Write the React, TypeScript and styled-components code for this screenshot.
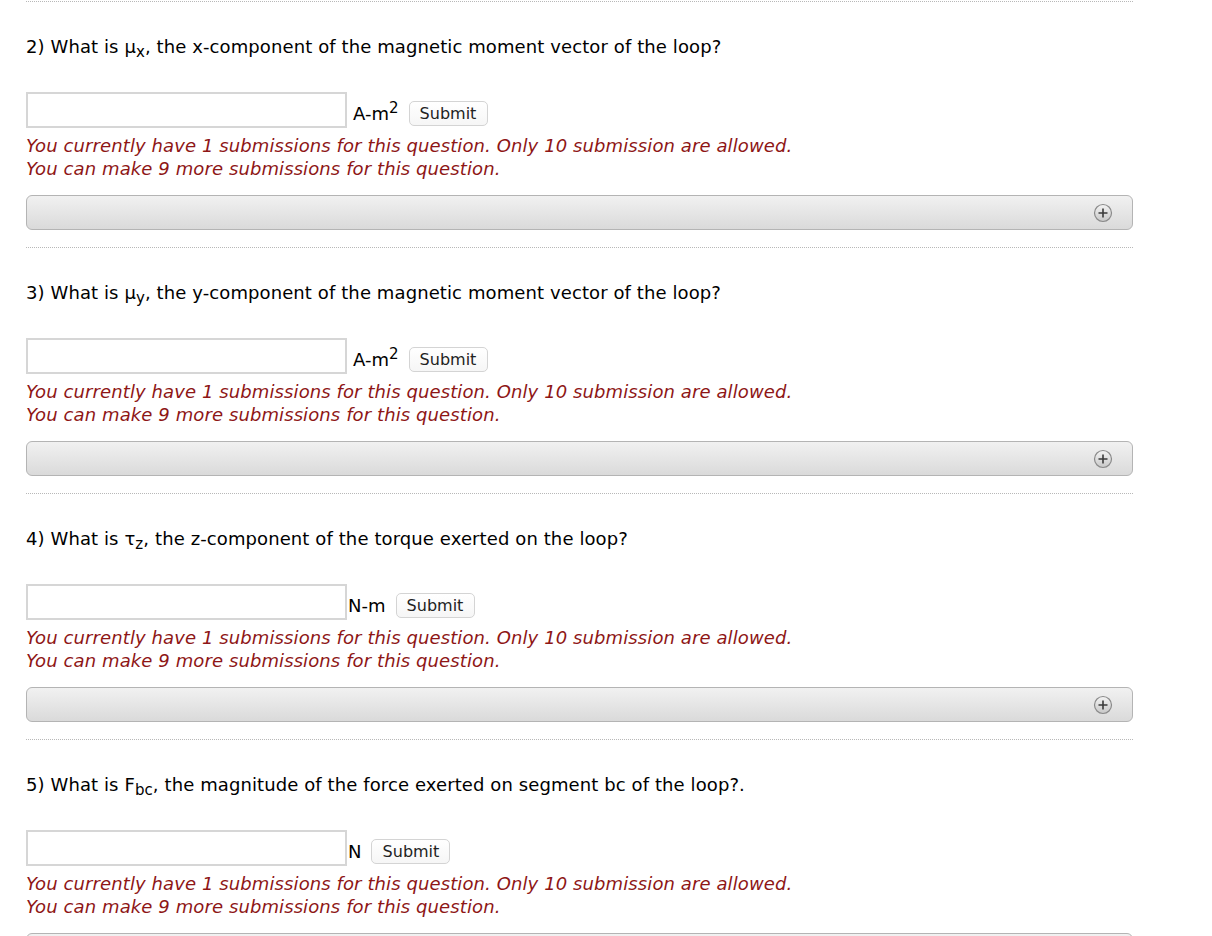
import React from "react";
import styled, { createGlobalStyle } from "styled-components";

const Global = createGlobalStyle`
  html, body { margin: 0; padding: 0; background: #ffffff; }
  body { font-family: "DejaVu Sans", "Open Sans", sans-serif; color: #000; }
`;

const Page = styled.div`
  padding: 1px 0 0 26px;
  width: 1107px;
`;

const Section = styled.section`
  border-top: 1px dotted #b8b8b8;
  display: flex;
  flex-direction: column;
  align-items: flex-start;
`;

const Title = styled.div`
  margin-top: 34px;
  font-size: 18px;
  letter-spacing: 0.1px;
  line-height: 22px;
  height: 22px;
`;

const Sub = styled.sub`
  font-size: 15px;
  line-height: 0;
  vertical-align: -4px;
`;

const AnswerRow = styled.div`
  margin-top: 34px;
  display: flex;
  align-items: flex-end;
  height: 36px;
`;

const Input = styled.input`
  box-sizing: border-box;
  width: 321px;
  height: 36px;
  border: 2px solid #d6d6d6;
  background: #fff;
  margin: 0;
  outline: none;
`;

const Unit = styled.span<{ $gap: number }>`
  margin-left: ${(p) => p.$gap}px;
  margin-bottom: 3px;
  font-size: 18px;
  line-height: 22px;
`;

const Sup = styled.sup`
  font-size: 15px;
  line-height: 0;
  vertical-align: 7px;
`;

const SubmitButton = styled.button`
  box-sizing: border-box;
  margin: 0 0 2px 10px;
  width: 79px;
  height: 25px;
  border: 1px solid #d4d4d4;
  border-radius: 5px;
  background: linear-gradient(#ffffff, #f6f6f6);
  font-family: "DejaVu Sans", "Open Sans", sans-serif;
  font-size: 16px;
  color: #222;
  padding: 0;
`;

const Notice = styled.div`
  margin-top: 6px;
  color: #8e1616;
  font-style: italic;
  font-size: 18px;
  letter-spacing: 0.1px;
  line-height: 23px;
`;

const Bar = styled.div`
  box-sizing: border-box;
  margin-top: 15px;
  margin-bottom: 17px;
  width: 1107px;
  height: 35px;
  border: 1px solid #b4b4b4;
  border-radius: 6px;
  background: linear-gradient(#f1f1f1, #dadada);
  display: flex;
  align-items: center;
  justify-content: flex-end;
  padding-right: 19px;
`;

const PlusIcon = () => (
  <svg width="20" height="20" viewBox="0 0 20 20">
    <defs>
      <linearGradient id="pg" x1="0" y1="0" x2="0" y2="1">
        <stop offset="0" stopColor="#f4f4f4" />
        <stop offset="1" stopColor="#c8c8c8" />
      </linearGradient>
    </defs>
    <circle cx="10" cy="10" r="8.5" fill="url(#pg)" stroke="#8a8a8a" strokeWidth="1.2" />
    <path d="M10 5.5v9M5.5 10h9" stroke="#3a3a3a" strokeWidth="1.6" />
  </svg>
);

type Q = {
  title: React.ReactNode;
  unit: React.ReactNode;
  gap: number;
};

const questions: Q[] = [
  {
    title: (
      <>
        2) What is μ<Sub>x</Sub>, the x-component of the magnetic moment vector of the loop?
      </>
    ),
    unit: (
      <>
        A-m<Sup>2</Sup>
      </>
    ),
    gap: 6,
  },
  {
    title: (
      <>
        3) What is μ<Sub>y</Sub>, the y-component of the magnetic moment vector of the loop?
      </>
    ),
    unit: (
      <>
        A-m<Sup>2</Sup>
      </>
    ),
    gap: 6,
  },
  {
    title: (
      <>
        4) What is τ<Sub>z</Sub>, the z-component of the torque exerted on the loop?
      </>
    ),
    unit: <>N-m</>,
    gap: 1,
  },
  {
    title: (
      <>
        5) What is F<Sub>bc</Sub>, the magnitude of the force exerted on segment bc of the loop?.
      </>
    ),
    unit: <>N</>,
    gap: 1,
  },
];

export default function App() {
  return (
    <>
      <Global />
      <Page>
        {questions.map((q, i) => (
          <Section key={i}>
            <Title>{q.title}</Title>
            <AnswerRow>
              <Input type="text" />
              <Unit $gap={q.gap}>{q.unit}</Unit>
              <SubmitButton>Submit</SubmitButton>
            </AnswerRow>
            <Notice>
              You currently have 1 submissions for this question. Only 10 submission are allowed.
              <br />
              You can make 9 more submissions for this question.
            </Notice>
            <Bar>
              <PlusIcon />
            </Bar>
          </Section>
        ))}
      </Page>
    </>
  );
}
